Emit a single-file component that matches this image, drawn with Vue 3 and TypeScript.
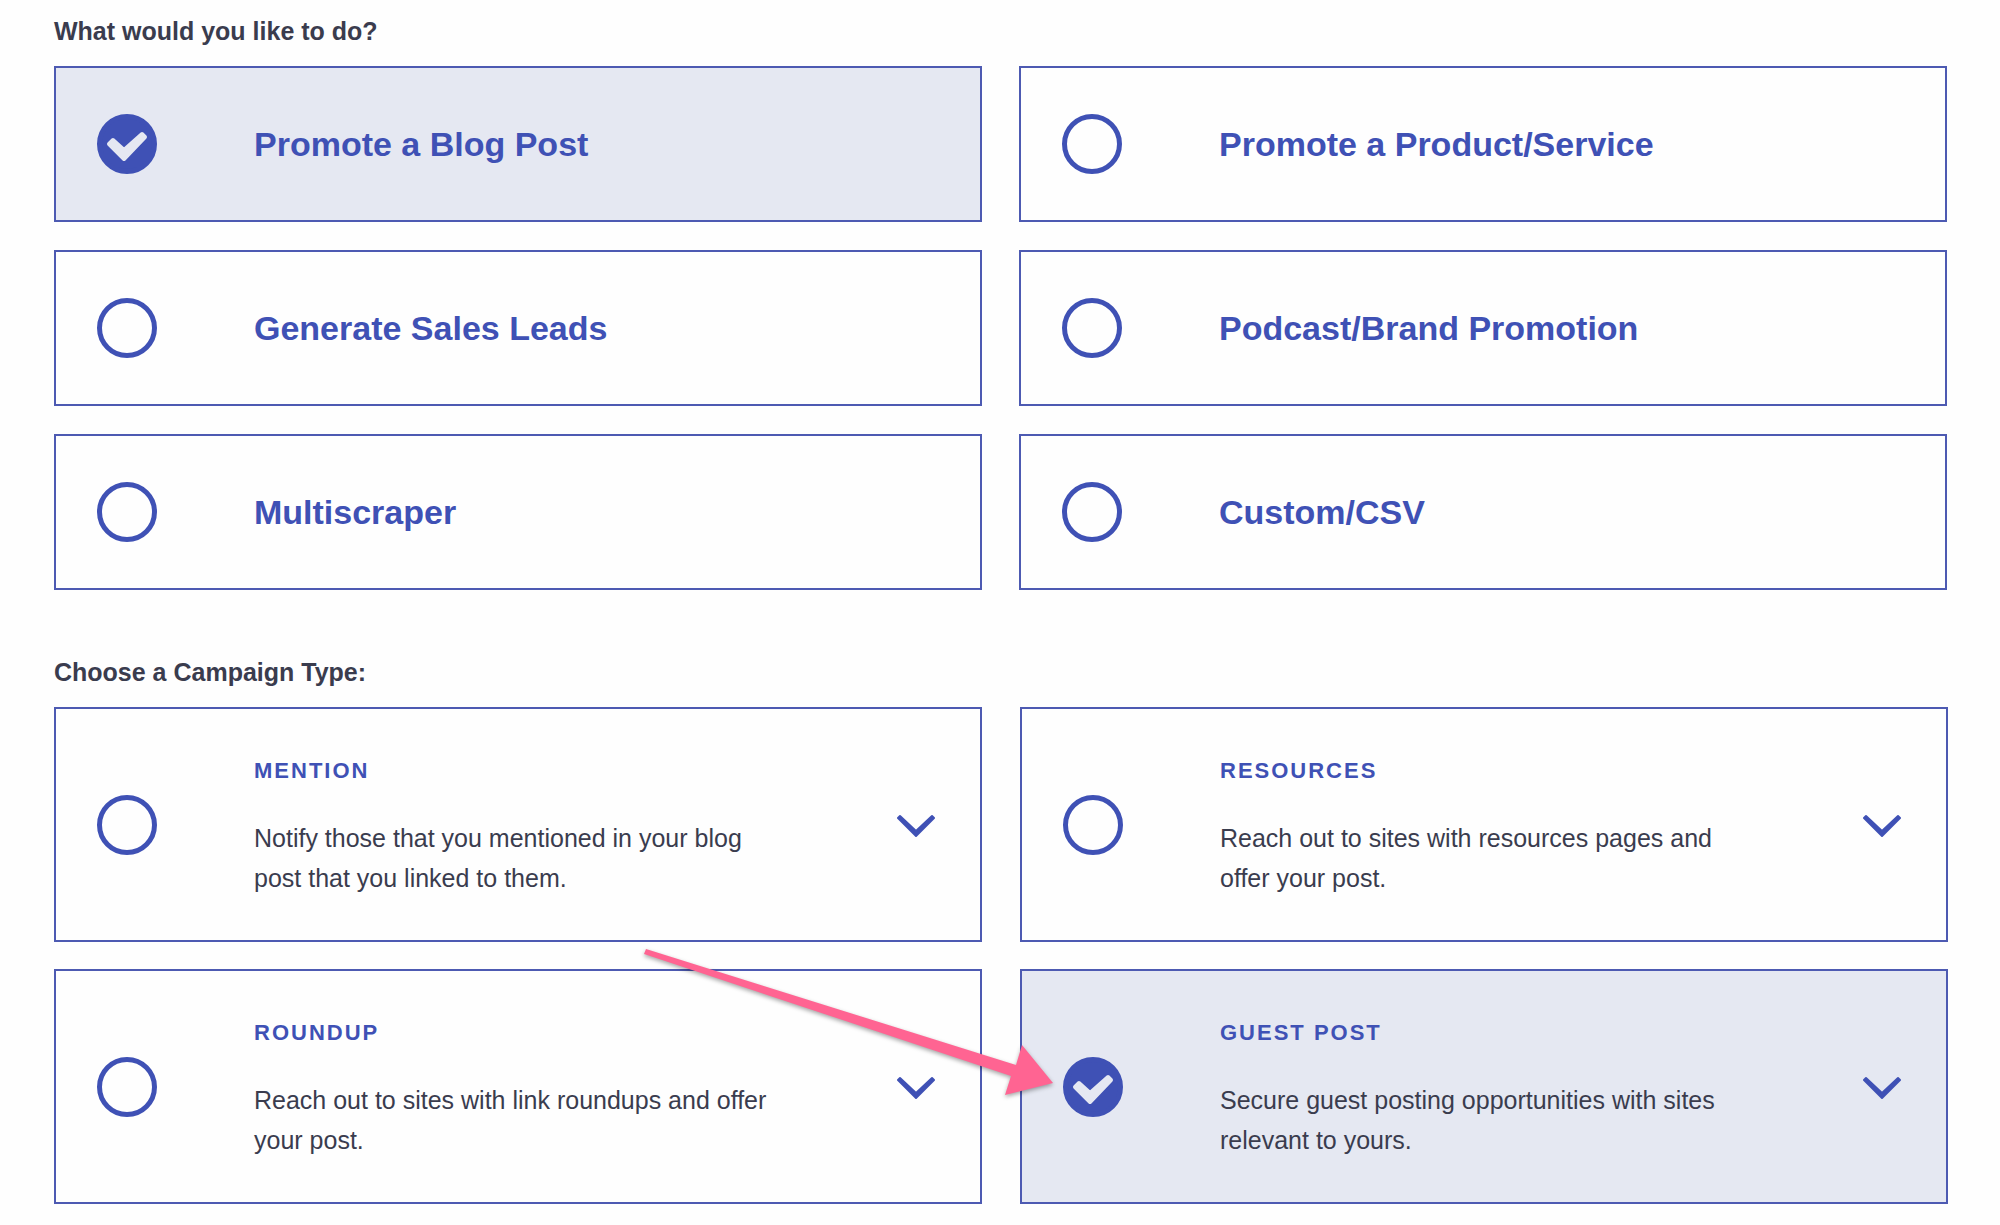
<script setup lang="ts">
import { ref } from 'vue'

interface Goal {
  id: string
  title: string
}

interface Campaign {
  id: string
  title: string
  description: string
}

const goals: Goal[] = [
  { id: 'blog-post', title: 'Promote a Blog Post' },
  { id: 'product', title: 'Promote a Product/Service' },
  { id: 'leads', title: 'Generate Sales Leads' },
  { id: 'podcast', title: 'Podcast/Brand Promotion' },
  { id: 'multiscraper', title: 'Multiscraper' },
  { id: 'custom', title: 'Custom/CSV' },
]

const campaigns: Campaign[] = [
  {
    id: 'mention',
    title: 'MENTION',
    description: 'Notify those that you mentioned in your blog post that you linked to them.',
  },
  {
    id: 'resources',
    title: 'RESOURCES',
    description: 'Reach out to sites with resources pages and offer your post.',
  },
  {
    id: 'roundup',
    title: 'ROUNDUP',
    description: 'Reach out to sites with link roundups and offer your post.',
  },
  {
    id: 'guest-post',
    title: 'GUEST POST',
    description: 'Secure guest posting opportunities with sites relevant to yours.',
  },
]

const goal = ref('blog-post')
const campaign = ref('guest-post')
</script>

<template>
  <main class="page">
    <section class="goals" role="radiogroup" aria-labelledby="goals-heading">
      <h2 id="goals-heading" class="heading">What would you like to do?</h2>
      <div class="grid">
        <div v-for="item in goals" :key="item.id" class="card" :class="{ selected: goal === item.id }">
          <label class="choice goal">
            <span class="mark">
              <input v-model="goal" class="radio" type="radio" name="goal" :value="item.id" />
              <svg v-if="goal === item.id" class="tick" viewBox="0 0 60 60" aria-hidden="true">
                <path d="M12 30 16 26 27 36 45 20 48 23 27 45Z" />
              </svg>
            </span>
            <span class="goal-title">{{ item.title }}</span>
          </label>
        </div>
      </div>
    </section>

    <section class="campaigns" role="radiogroup" aria-labelledby="campaigns-heading">
      <h2 id="campaigns-heading" class="heading">Choose a Campaign Type:</h2>
      <div class="grid">
        <div
          v-for="item in campaigns"
          :key="item.id"
          class="card"
          :class="{ selected: campaign === item.id }"
        >
          <label class="choice">
            <span class="mark">
              <input v-model="campaign" class="radio" type="radio" name="campaign" :value="item.id" />
              <svg v-if="campaign === item.id" class="tick" viewBox="0 0 60 60" aria-hidden="true">
                <path d="M12 30 16 26 27 36 45 20 48 23 27 45Z" />
              </svg>
            </span>
            <span class="details">
              <span class="campaign-title">{{ item.title }}</span>
              <span class="description">{{ item.description }}</span>
            </span>
          </label>
          <button class="expand" type="button" :aria-label="`More about ${item.title}`">
            <svg width="38" height="26" viewBox="0 0 38 26" aria-hidden="true">
              <path d="M1 6 3 4 19 19 35 4 37 6 19 24Z" />
            </svg>
          </button>
          <!-- Pointer leading to the recommended campaign's radio -->
          <svg
            v-if="item.id === 'guest-post'"
            class="pointer"
            width="420"
            height="160"
            viewBox="0 0 420 160"
            aria-hidden="true"
          >
            <path d="M6 4 376 120 382 100 413 138 365 150 371 131 4 9Z" />
          </svg>
        </div>
      </div>
    </section>
  </main>
</template>

<style>
body {
  margin: 0;
  background: #fefefe;
}
</style>

<style scoped>
.page {
  display: flex;
  flex-direction: column;
  gap: 67px;
  padding: 16px 52px 21px 54px;
  color: #3a3c4e;
  font-family: 'Liberation Sans', Arial, sans-serif;
}

.heading {
  margin: 0 0 20px;
  font-size: 25px;
  font-weight: 700;
  line-height: 30px;
}

.grid {
  display: grid;
  grid-template-columns: repeat(2, minmax(0, 1fr));
  gap: 27px 38px;
}

.goals {
  padding-right: 1px;
}

.goals .grid {
  gap: 28px 37px;
}

.card {
  position: relative;
  display: flex;
  align-items: center;
  border: 2px solid #4d5ab2;
}

.card.selected {
  background: #e5e8f2;
}

.choice {
  display: flex;
  flex: 1;
  align-items: center;
  gap: 97px;
  padding-left: 41px;
  cursor: pointer;
}

.goal {
  min-height: 152px;
}

.mark {
  display: grid;
  flex: none;
  width: 60px;
  height: 60px;
}

.radio {
  grid-area: 1 / 1;
  box-sizing: border-box;
  width: 60px;
  height: 60px;
  margin: 0;
  border: 5px solid #3f51b5;
  border-radius: 50%;
  appearance: none;
  cursor: pointer;
}

.radio:checked {
  background: #3f51b5;
}

.tick {
  z-index: 1;
  grid-area: 1 / 1;
  fill: #e5e8f2;
  stroke: #e5e8f2;
  stroke-width: 4;
  stroke-linejoin: round;
  pointer-events: none;
}

.goal-title {
  color: #3f51b5;
  font-size: 34px;
  font-weight: 700;
  line-height: 40px;
}

.details {
  display: flex;
  flex: 1;
  flex-direction: column;
  gap: 33px;
  padding: 48px 0 42px;
}

.campaign-title {
  color: #3f51b5;
  font-size: 22px;
  font-weight: 700;
  line-height: 28px;
  letter-spacing: 2px;
}

.description {
  font-size: 25px;
  line-height: 40px;
}

.expand {
  display: flex;
  flex: none;
  margin: 0 45px 0 120px;
  padding: 0;
  border: 0;
  background: none;
  cursor: pointer;
}

.expand path {
  fill: #3f51b5;
  stroke: #3f51b5;
  stroke-width: 2;
  stroke-linejoin: round;
}

.pointer {
  position: absolute;
  top: -26px;
  left: -382px;
  fill: #ff6492;
  filter: drop-shadow(0 2px 2px rgb(0 0 0 / 35%));
  pointer-events: none;
}
</style>
